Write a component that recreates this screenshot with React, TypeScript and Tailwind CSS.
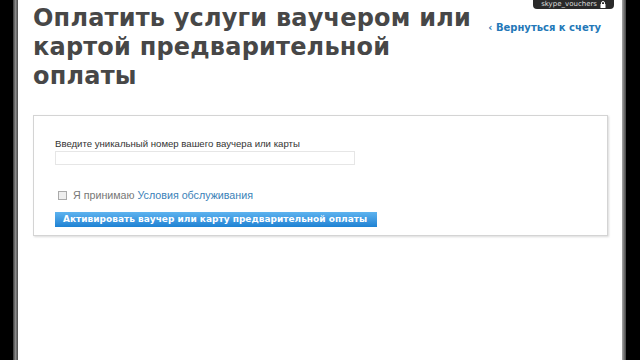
import React from "react";

function Lock() {
  return (
    <svg width="6" height="7" viewBox="0 0 6 7" className="inline-block">
      <rect x="0.5" y="3" width="5" height="4" fill="#fff" />
      <path d="M1.5 3V2a1.5 1.5 0 0 1 3 0v1" stroke="#fff" strokeWidth="1" fill="none" />
    </svg>
  );
}

export default function App() {
  return (
    <div className="flex h-[360px] w-[640px] overflow-hidden bg-black">
      <div className="w-[13px] bg-black" />
      <div className="w-[5px] bg-gradient-to-r from-[#3a3a3a] via-[#8a8a8a] to-[#4a4a4a]" />
      <div className="relative flex-1 bg-white pl-[15px] pr-[14px] font-['DejaVu_Sans',sans-serif]">
        <div className="absolute right-[8px] top-0 flex h-[9px] items-center gap-[3px] rounded-b-[4px] bg-[#2a2a2a] px-[8px] text-[7px] leading-none text-[#ddd]">
          <span>skype_vouchers</span>
          <Lock />
        </div>

        <div className="flex items-start justify-between pt-[4px]">
          <h1 className="w-[450px] text-[24px] font-bold leading-[29px] tracking-[0.2px] text-[#474747]">
            Оплатить услуги ваучером или картой предварительной оплаты
          </h1>
          <a className="mr-[7px] mt-[16px] text-[10px] font-bold text-[#2478b8]">‹ Вернуться к счету</a>
        </div>

        <div className="mt-[24px] h-[121px] border border-[#d4d4d4] pl-[21px] pt-[21px] shadow-[1px_1px_2px_rgba(0,0,0,0.15)]">
          <div className="font-['Liberation_Sans',sans-serif] text-[9.6px] leading-[13px] text-[#333]">
            Введите уникальный номер вашего ваучера или карты
          </div>
          <div className="mt-[1px] h-[14px] w-[300px] border border-[#e6e6e6]" />
          <div className="mt-[22px] flex items-center gap-[6px] pl-[3px] font-['Liberation_Sans',sans-serif] text-[10.7px] text-[#777]">
            <span className="h-[9px] w-[9px] border border-[#aaa] bg-[#eee]" />
            <span>
              Я принимаю <span className="text-[#3b82b8]">Условия обслуживания</span>
            </span>
          </div>
          <button className="mt-[9px] h-[15px] w-[322px] bg-gradient-to-b from-[#5db3ef] to-[#1d82d3] pl-[8px] text-left text-[9px] font-bold leading-[15px] text-white">
            Активировать ваучер или карту предварительной оплаты
          </button>
        </div>
      </div>
      <div className="w-[4px] bg-gradient-to-r from-[#aaa] to-[#444]" />
      <div className="w-[14px] bg-black" />
    </div>
  );
}
